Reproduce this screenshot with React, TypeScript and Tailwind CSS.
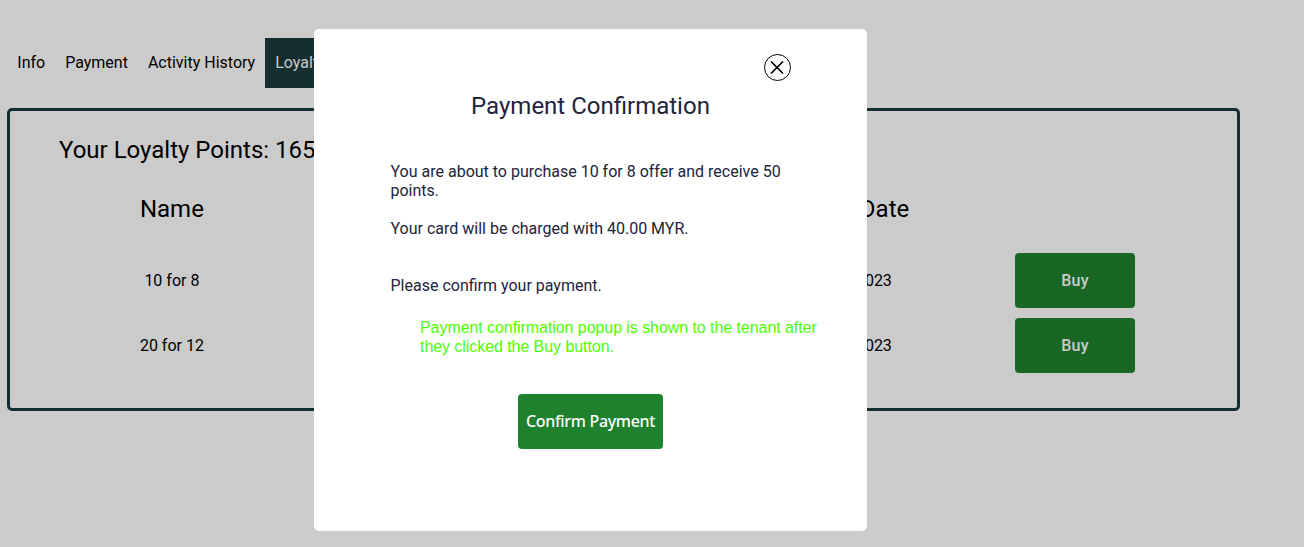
import React from "react";

const tabs = ["Info", "Payment", "Activity History"];

const offers = [
  { name: "10 for 8", expires: "31/12/2023" },
  { name: "20 for 12", expires: "31/12/2023" },
];

function Tabs() {
  return (
    <nav className="flex h-[50px] items-stretch pl-[7.3px] text-base leading-[50px]">
      {tabs.map((tab) => (
        <a key={tab} className="px-[10px] whitespace-nowrap">
          {tab}
        </a>
      ))}
      <a className="bg-[#142e2f] px-[10px] whitespace-nowrap text-[#cbcbcb]">Loyalty</a>
    </nav>
  );
}

function Offers() {
  return (
    <section className="mt-5 ml-[7px] h-[303px] w-[1233px] rounded-[5px] border-[3px] border-[#142e2f] px-[49px] pt-[25px]">
      <h2 className="text-2xl leading-7">Your Loyalty Points: 165</h2>
      <div className="mt-[31px] grid h-7 grid-cols-5 text-center text-2xl leading-7">
        <div>Name</div>
        <div className="col-start-4">Expiry Date</div>
      </div>
      <div className="mt-[30px] flex flex-col gap-[10px]">
        {offers.map((offer) => (
          <div key={offer.name} className="grid h-[55px] grid-cols-5 text-center leading-[55px]">
            <div>{offer.name}</div>
            <div className="col-start-4">{offer.expires}</div>
            <button className="mx-auto w-[120px] rounded-[4px] bg-[#186724] font-medium tracking-[0.3px] text-[#cbcbcb]">
              Buy
            </button>
          </div>
        ))}
      </div>
    </section>
  );
}

function ConfirmationDialog() {
  return (
    <div
      role="dialog"
      className="absolute top-[29px] left-[314px] flex h-[502px] w-[553px] flex-col rounded-[5px] bg-white px-[76px] pt-[25px] text-[#23233c]"
    >
      <button aria-label="Close" className="self-end">
        <svg width="27" height="27" viewBox="0 0 27 27" fill="none" stroke="#000">
          <circle cx="13.5" cy="13.5" r="13" />
          <path d="M7 7.5 19 19.5M19 7.5 7 19.5" strokeWidth="1.7" />
        </svg>
      </button>
      <h1 className="mt-[11px] text-center text-2xl leading-7">Payment Confirmation</h1>
      <p className="mt-[42px] ml-[0.5px] text-base leading-[19px]">
        You are about to purchase 10 for 8 offer and receive 50 points.
      </p>
      <p className="mt-[19px] ml-[0.5px] leading-[19px]">Your card will be charged with 40.00 MYR.</p>
      <p className="mt-[38px] ml-[0.5px] leading-[19px]">Please confirm your payment.</p>
      <p className="mt-[23px] ml-[30px] w-[410px] font-['Liberation_Sans',Arial,sans-serif] leading-[19px] tracking-[-0.065px] text-[#4dff00]">
        Payment confirmation popup is shown to the tenant after they clicked the Buy button.
      </p>
      <button className="mt-[38px] h-[55px] w-[145px] self-center rounded-[4px] bg-[#1e812e] pb-[2px] font-['Noto_Sans',sans-serif] text-base font-medium tracking-[-0.32px] whitespace-nowrap text-white">
        Confirm Payment
      </button>
    </div>
  );
}

export default function App() {
  return (
    <main className="relative h-[547px] w-[1304px] overflow-hidden bg-[#cbcbcb] pt-[38px] font-[Roboto,sans-serif] text-black">
      <Tabs />
      <Offers />
      <ConfirmationDialog />
    </main>
  );
}
